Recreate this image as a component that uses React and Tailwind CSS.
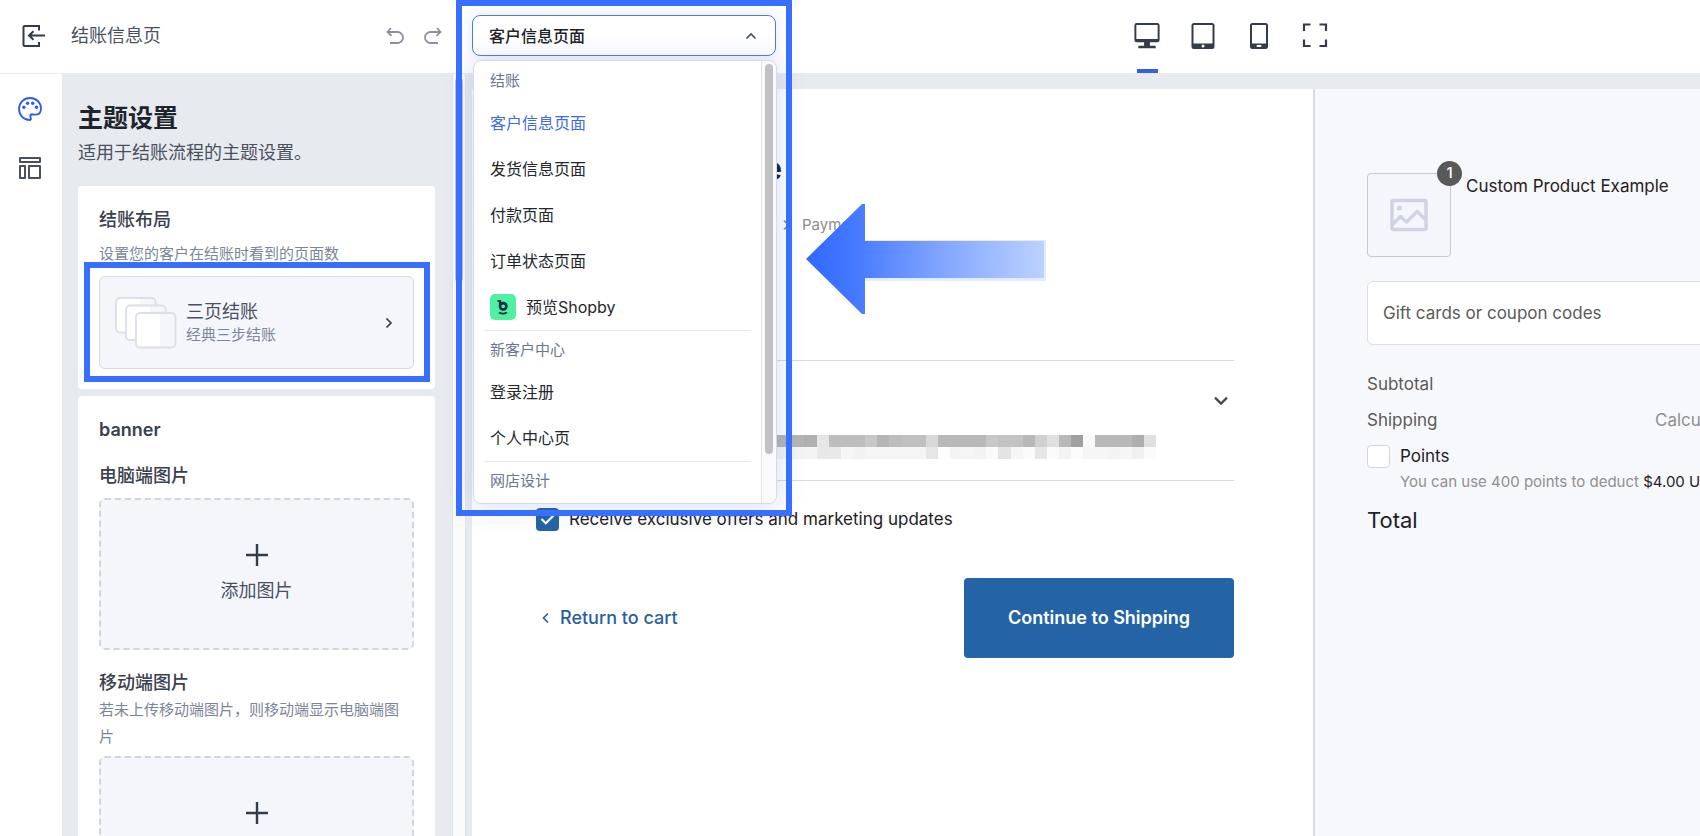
const ICON_DARK = "#343b49";

function ExitIcon() {
  return (
    <svg width="24" height="24" viewBox="0 0 24 24" fill="none" stroke={ICON_DARK} strokeWidth="2">
      <path d="M17 6.5V2H2.5a1 1 0 0 0-1 1v18a1 1 0 0 0 1 1H17v-4" />
      <path d="M23 11.500H7M11.500 7.200 7 11.500l4.500 4.300" />
    </svg>
  );
}

function UndoIcon() {
  return (
    <svg width="18" height="18" viewBox="0 0 18 18" fill="none" stroke="#8b909b" strokeWidth="1.800">
      <path d="M5 1 1.500 5 5.500 8.800M1.500 5h10a5.300 5.300 0 0 1 0 11H4" />
    </svg>
  );
}

function RedoIcon() {
  return (
    <svg width="18" height="18" viewBox="0 0 18 18" fill="none" stroke="#8b909b" strokeWidth="1.800">
      <path d="M13 1l3.500 4-4 3.800M16.500 5h-10a5.300 5.300 0 0 0 0 11H14" />
    </svg>
  );
}

function PaletteIcon() {
  return (
    <svg width="24" height="24" viewBox="0 0 70 70" fill="none">
      <path
        d="M35 3C17 3 3 17 3 35c0 18 14 32 31 32 3.500 0 4-2 3.500-4-.8-3-1.500-5-1.500-8 0-3 2-4.500 6-4.500 4 1 7 1 11 1C62 51 67 44 67 33 67 16 53 3 35 3Z"
        stroke="#2f5fe0"
        strokeWidth="5.500"
        strokeLinejoin="round"
      />
      <g fill="#2f5fe0">
        <circle cx="17" cy="30" r="5" />
        <circle cx="28" cy="18" r="5" />
        <circle cx="43" cy="18" r="5" />
        <circle cx="54" cy="30" r="5" />
      </g>
    </svg>
  );
}

function SectionsIcon() {
  return (
    <svg width="22" height="22" viewBox="0 0 22 22" fill="none" stroke="#4a505e" strokeWidth="2" strokeLinejoin="round">
      <rect x="1" y="1" width="20" height="4" />
      <rect x="1" y="9" width="5" height="12" />
      <rect x="10" y="9" width="11" height="12" />
    </svg>
  );
}

function DesktopIcon() {
  return (
    <svg width="28" height="28" viewBox="0 0 28 28">
      <path
        fillRule="evenodd"
        fill={ICON_DARK}
        d="M3.500 1h21A2.500 2.500 0 0 1 27 3.500v15a2.500 2.500 0 0 1-2.500 2.500h-7.500v3.500H22c.6 0 1 .4 1 1v1.500H5v-1.500c0-.6.4-1 1-1h5V21H3.500A2.500 2.500 0 0 1 1 18.500v-15A2.500 2.500 0 0 1 3.500 1ZM3 3v14.500h22V3H3Z"
      />
    </svg>
  );
}

function TabletIcon() {
  return (
    <svg width="28" height="28" viewBox="0 0 28 28">
      <path
        fillRule="evenodd"
        fill={ICON_DARK}
        d="M5 1h18a2.500 2.500 0 0 1 2.500 2.500v21A2.500 2.500 0 0 1 23 27H5a2.500 2.500 0 0 1-2.500-2.500v-21A2.500 2.500 0 0 1 5 1Zm-.5 2v18.500h19V3h-19Z"
      />
      <circle cx="14" cy="24" r="1.500" fill="#fff" />
    </svg>
  );
}

function PhoneIcon() {
  return (
    <svg width="28" height="28" viewBox="0 0 28 28">
      <path
        fillRule="evenodd"
        fill={ICON_DARK}
        d="M7.500 1h13A2.500 2.500 0 0 1 23 3.500v21a2.500 2.500 0 0 1-2.500 2.500h-13A2.500 2.500 0 0 1 5 24.500v-21A2.500 2.500 0 0 1 7.500 1ZM7 3v18.500h14V3H7Z"
      />
      <rect x="11.500" y="23" width="5" height="2" rx="1" fill="#fff" />
    </svg>
  );
}

function FullscreenIcon() {
  return (
    <svg width="28" height="28" viewBox="0 0 28 28" fill="none" stroke={ICON_DARK} strokeWidth="2.200">
      <path d="M3 10V3.500h6.500M18.500 3.500H25V10M25 18.500V25h-6.500M9.500 25H3v-6.500" />
    </svg>
  );
}

function PagesIcon() {
  const pages = [
    [1, 1],
    [11, 8.5],
    [21, 16],
  ];
  return (
    <svg width="62" height="52" viewBox="0 0 62 52" fill="none">
      {pages.map(([x, y]) => (
        <g key={x}>
          <rect x={x} y={y} width="39.500" height="34.500" rx="4" fill="#fff" />
          <rect x={x + 24} y={y} width="15" height="34.500" rx="3" fill="#f5f6fa" />
          <rect x={x} y={y} width="39.500" height="34.500" rx="4" stroke="#dcdee9" strokeWidth="1.800" />
        </g>
      ))}
    </svg>
  );
}

function PlusIcon() {
  return (
    <svg width="22" height="22" viewBox="0 0 22 22" stroke={ICON_DARK} strokeWidth="2.400">
      <path d="M11 0v22M0 11h22" />
    </svg>
  );
}

function ImageIcon() {
  return (
    <svg width="40" height="34" viewBox="0 0 40 34" fill="none" stroke="#d0d4e2" strokeWidth="3.500">
      <rect x="3" y="2.500" width="34" height="29" rx="1.500" />
      <path d="M3 27l8.500-8.500 6 5.500L28 13.500 37 22" strokeLinejoin="round" />
      <circle cx="10.500" cy="10" r="2.500" fill="#d0d4e2" stroke="none" />
    </svg>
  );
}

function ShopbyLogo() {
  return (
    <svg width="26" height="26" viewBox="0 0 26 26" fill="none">
      <rect width="26" height="26" rx="5" fill="#4ff0a2" />
      <path d="M7.500 7H10v5.500" stroke="#0c2c45" strokeWidth="2.200" />
      <circle cx="13.200" cy="12.300" r="3.200" stroke="#0c2c45" strokeWidth="2.600" />
      <path d="M9 18.500c2.500 1.500 5.500 1.500 8 0" stroke="#0c2c45" strokeWidth="1.800" />
    </svg>
  );
}

function Chevron({ d, size = 12, color = ICON_DARK }) {
  return (
    <svg width={size} height={size} viewBox="0 0 12 12" fill="none" stroke={color} strokeWidth="1.700">
      <path d={d} />
    </svg>
  );
}

const MOSAIC = [
  "b5 b5 b5 b0 e6 bd bd bd c8 b5 bd c0 c0 d8 b9 b9 b9 b9 c8 c3 c3 b8 d0 e0 b8 a0 f9 b8 b8 b8 ae e0",
  "f4 f4 f4 f4 e8 e9 f6 f2 f5 f5 f5 f5 f5 e6 fd f4 f5 f3 fa e4 f6 fb e6 fb f3 fc f6 f6 f3 f6 f0 fb",
].map((row) => row.split(" "));

function Mosaic() {
  return (
    <svg className="-ml-1 mr-auto" width="388" height="24" viewBox="0 0 32 2" preserveAspectRatio="none" shapeRendering="crispEdges">
      {MOSAIC.map((row, y) =>
        row.map((v, x) => <rect key={x + "-" + y} x={x} y={y} width="1" height="1" fill={"#" + v + v + v} />)
      )}
    </svg>
  );
}

function MenuGroup({ children }) {
  return <div className="flex h-[38px] items-center px-[5px] text-[15px] text-[#6b7690]">{children}</div>;
}

function MenuItem({ children, selected = false }) {
  return (
    <button
      type="button"
      role="option"
      aria-selected={selected}
      className={
        "flex h-[46px] w-full items-center gap-[10px] px-[5px] text-left text-base " +
        (selected ? "text-[#3f6ae8]" : "text-[#24272e]")
      }
    >
      {children}
    </button>
  );
}

function PageSelect() {
  return (
    <div className="relative z-20 w-[304px] shrink-0">
      <button
        type="button"
        aria-haspopup="listbox"
        aria-expanded="true"
        className="flex h-[41px] w-full items-center justify-between rounded-lg border border-[#4a7ddb] bg-white pl-4 pr-[18px] text-base font-medium text-[#1d2129] shadow-[0_0_16px_rgba(60,100,220,0.14)]"
      >
        客户信息页面
        <Chevron d="M1.500 8.500 6 4l4.500 4.500" color="#4a505e" />
      </button>
      <div className="absolute left-px top-[45px] flex w-full overflow-hidden rounded-lg border border-[#d5daea] bg-white shadow-[0_2px_28px_rgba(70,100,210,0.22)]">
        <div role="listbox" aria-label="页面" className="flex-1 pb-[3px] pl-[11px] pr-[10px] pt-px">
          <MenuGroup>结账</MenuGroup>
          <MenuItem selected>客户信息页面</MenuItem>
          <MenuItem>发货信息页面</MenuItem>
          <MenuItem>付款页面</MenuItem>
          <MenuItem>订单状态页面</MenuItem>
          <MenuItem>
            <ShopbyLogo />
            预览Shopby
          </MenuItem>
          <div className="border-t border-[#e6e7eb]" />
          <MenuGroup>新客户中心</MenuGroup>
          <MenuItem>登录注册</MenuItem>
          <MenuItem>个人中心页</MenuItem>
          <div className="border-t border-[#e6e7eb]" />
          <MenuGroup>网店设计</MenuGroup>
        </div>
        <div className="w-[15px] border-l border-[#e4e4e6] bg-[#fafafa] px-[3px] pt-[3px]">
          <div className="h-[390px] w-2 rounded-full bg-[#c1c1c1]" />
        </div>
      </div>
      <div className="pointer-events-none absolute -left-4 -top-[15px] h-[516px] w-[336px] border-[6px] border-[#376fff]" />
    </div>
  );
}

function TopBar() {
  return (
    <header className="flex h-[74px] shrink-0 border-b border-[#e7e9ee] bg-white">
      <div className="flex w-[472px] shrink-0 items-center pb-[2px] pl-[22px] pr-[30px]">
        <button type="button" aria-label="退出">
          <ExitIcon />
        </button>
        <span className="ml-[25px] flex-1 text-lg text-[#4a505e]">结账信息页</span>
        <div className="flex gap-5">
          <button type="button" aria-label="撤销">
            <UndoIcon />
          </button>
          <button type="button" aria-label="重做">
            <RedoIcon />
          </button>
        </div>
      </div>
      <div className="pt-[15px]">
        <PageSelect />
      </div>
      <div className="flex flex-1 justify-center pr-[14px]">
        <button type="button" aria-label="桌面" className="flex w-14 flex-col items-center pt-[22px]">
          <DesktopIcon />
          <span className="mt-5 h-1 w-[21px] bg-[#335fe6]" />
        </button>
        <button type="button" aria-label="平板" className="flex w-14 flex-col items-center pt-[22px]">
          <TabletIcon />
        </button>
        <button type="button" aria-label="手机" className="flex w-14 flex-col items-center pt-[22px]">
          <PhoneIcon />
        </button>
        <button type="button" aria-label="全屏" className="flex w-14 flex-col items-center pt-[21px]">
          <FullscreenIcon />
        </button>
      </div>
    </header>
  );
}

function UploadBox() {
  return (
    <button
      type="button"
      className="flex h-[152px] w-full flex-col items-center justify-center gap-3 rounded-md border-2 border-dashed border-[#d3d5de] bg-[#f5f6fb] text-lg leading-[26px] text-[#4a505e]"
    >
      <PlusIcon />
      添加图片
    </button>
  );
}

function SettingsPanel() {
  return (
    <section className="w-[390px] shrink-0 overflow-hidden bg-[#e7eaef] pl-4 pr-[17px] pt-7">
      <h1 className="text-[25px] font-semibold leading-8 text-[#20242c]">主题设置</h1>
      <p className="mb-[19px] mt-[5px] text-lg leading-7 text-[#4a505e]">适用于结账流程的主题设置。</p>

      <div className="mb-[7px] rounded bg-white px-[21px] pb-5 pt-[22px]">
        <h2 className="text-lg font-medium leading-6 text-[#3a404d]">结账布局</h2>
        <p className="mt-3 text-[15px] leading-5 text-[#7d8598]">设置您的客户在结账时看到的页面数</p>
        <div className="relative mt-3">
          <button
            type="button"
            className="flex h-[93px] w-full items-center rounded-md border border-[#d6d9e2] bg-[#f5f6fb] pl-[15px] pr-[18px] text-left"
          >
            <PagesIcon />
            <span className="ml-[9px] flex flex-1 flex-col pt-px">
              <span className="text-lg leading-6 text-[#4a505e]">三页结账</span>
              <span className="text-[15px] leading-[22px] text-[#7d8598]">经典三步结账</span>
            </span>
            <Chevron d="M3.500 1.500 8 6l-4.500 4.500" />
          </button>
          <div className="pointer-events-none absolute -bottom-[13px] -left-[15px] -right-4 -top-[14px] border-[6px] border-[#376fff]" />
        </div>
      </div>

      <div className="rounded bg-white px-[21px] pb-5 pt-[22px]">
        <h2 className="text-lg font-semibold leading-6 text-[#3a404d]">banner</h2>
        <h3 className="mb-[10px] mt-[22px] text-lg font-medium leading-6 text-[#3a404d]">电脑端图片</h3>
        <UploadBox />
        <h3 className="mt-[21px] text-lg font-medium leading-6 text-[#3a404d]">移动端图片</h3>
        <p className="mb-[6px] mt-px pr-1 text-[15px] leading-[27px] text-[#7d8598]">
          {"若未上传移动端图片\uFF0C则移动端显示电脑端图片"}
        </p>
        <UploadBox />
      </div>
    </section>
  );
}

function ArrowMark() {
  return (
    <svg className="pointer-events-none absolute left-[333px] top-[114px]" width="242" height="112" viewBox="0 0 242 112">
      <defs>
        <linearGradient id="arrow" x1="0" y1="56" x2="240" y2="56" gradientUnits="userSpaceOnUse">
          <stop offset="0" stopColor="#2f68ff" />
          <stop offset="0.200" stopColor="#4478ff" />
          <stop offset="0.600" stopColor="#86a9ff" />
          <stop offset="1" stopColor="#bcd2ff" />
        </linearGradient>
      </defs>
      <path d="M60 37H241V78H60Z" fill="#e3ecff" />
      <path d="M1 56 57 1h3v37h179v37H60v36h-3Z" fill="url(#arrow)" />
    </svg>
  );
}

function CheckoutForm() {
  return (
    <div className="relative flex flex-col bg-white pl-16 pr-[79px]">
      <h2 className="ml-[227px] mt-[60px] text-[32px] font-bold leading-10 text-[#1f2024]">e</h2>
      <div className="ml-[246px] mt-6 flex items-center gap-2 text-[15px] leading-6 text-[#8c8c8c]">
        <Chevron d="M2 1.500 6.500 6 2 10.500" color="#8c8c8c" size={12} />
        <span>Payment</span>
      </div>
      <ArrowMark />
      <div className="mt-[123px] flex h-[121px] flex-col border-y border-[#d8d9dc]">
        <button type="button" aria-label="展开" className="mr-[5px] mt-8 self-end">
          <Chevron d="M1.500 3.500 6 8l4.500-4.500" color="#4a4a4a" size={16} />
        </button>
        <div className="mt-[26px] pl-[236px]">
          <Mosaic />
        </div>
      </div>
      <label className="mt-[26px] flex items-center gap-[10px] text-[17px] leading-6 text-[#1f2024]">
        <span className="relative flex size-[23px]">
          <input type="checkbox" defaultChecked className="size-[23px] appearance-none rounded bg-[#2463a6]" />
          <svg className="pointer-events-none absolute left-1 top-1" width="15" height="15" viewBox="0 0 15 15" fill="none" stroke="#fff" strokeWidth="2.200">
            <path d="M1.500 7 5.800 11.300 13.500 3.500" />
          </svg>
        </span>
        Receive exclusive offers and marketing updates
      </label>
      <div className="mt-[47px] flex items-center justify-between">
        <a href="#cart" className="flex items-center gap-2 pl-1 text-lg font-medium text-[#2a609c]">
          <Chevron d="M8 1.500 3.500 6 8 10.500" color="#2a609c" size={12} />
          Return to cart
        </a>
        <button type="button" className="h-20 w-[270px] rounded bg-[#2463a6] text-lg font-semibold text-white">
          Continue to Shipping
        </button>
      </div>
    </div>
  );
}

function OrderSummary() {
  return (
    <aside className="overflow-hidden border-l-2 border-[#dcdde0] bg-[#f7f8fb] pl-[52px] pt-[84px] text-[17px] text-[#5a5a5a]">
      <div className="w-[440px]">
        <div className="flex">
          <div className="relative flex size-[84px] items-center justify-center rounded border border-[#c9cace] bg-[#f5f6fb]">
            <ImageIcon />
            <span className="absolute -right-3 -top-[13px] flex size-[25px] items-center justify-center rounded-full bg-[#595959] text-[15px] font-medium text-white">
              1
            </span>
          </div>
          <p className="ml-[15px] mt-px leading-6 text-[#1f2024]">Custom Product Example</p>
        </div>
        <input
          type="text"
          aria-label="Gift cards or coupon codes"
          placeholder="Gift cards or coupon codes"
          className="mt-6 h-16 w-full rounded-md border border-[#dcdde0] bg-white px-[15px] placeholder:text-[#5a5a5a]"
        />
        <div className="mt-[27px] flex leading-6">Subtotal</div>
        <div className="mt-3 flex leading-6">
          Shipping
          <span className="ml-auto w-[152px] text-[#8f8f8f]">Calculated</span>
        </div>
        <label className="mt-3 flex items-center gap-[10px] leading-6 text-[#1f2024]">
          <input type="checkbox" className="size-[23px] appearance-none rounded border border-[#d4d5d9] bg-white" />
          Points
        </label>
        <p className="ml-[33px] mt-[2px] whitespace-nowrap text-[15px] leading-6 text-[#8f8f8f]">
          You can use 400 points to deduct <span className="text-[#1f2024]">$4.00 USD</span>
        </p>
        <div className="mt-[10px] text-[22px] leading-8 text-[#1f2024]">Total</div>
      </div>
    </aside>
  );
}

export default function App() {
  return (
    <div className="flex h-screen flex-col overflow-hidden bg-white font-[Inter,'Noto_Sans_CJK_SC',sans-serif]">
      <TopBar />
      <div className="flex min-h-0 flex-1">
        <nav className="flex w-[62px] shrink-0 flex-col items-center gap-9 pr-[2px] pt-[23px]">
          <button type="button" aria-label="主题设置">
            <PaletteIcon />
          </button>
          <button type="button" aria-label="页面模块">
            <SectionsIcon />
          </button>
        </nav>
        <SettingsPanel />
        <div className="w-[14px] shrink-0 border-x border-[#e2e3e6] bg-[#fafafa] px-[2px] pt-1">
          <div className="h-[204px] w-2 rounded-full bg-[#c1c1c1]" />
        </div>
        <main className="grid flex-1 grid-cols-[minmax(0,1fr)_387px] bg-[#e7eaef] pl-[6px] pt-[15px]">
          <CheckoutForm />
          <OrderSummary />
        </main>
      </div>
    </div>
  );
}
